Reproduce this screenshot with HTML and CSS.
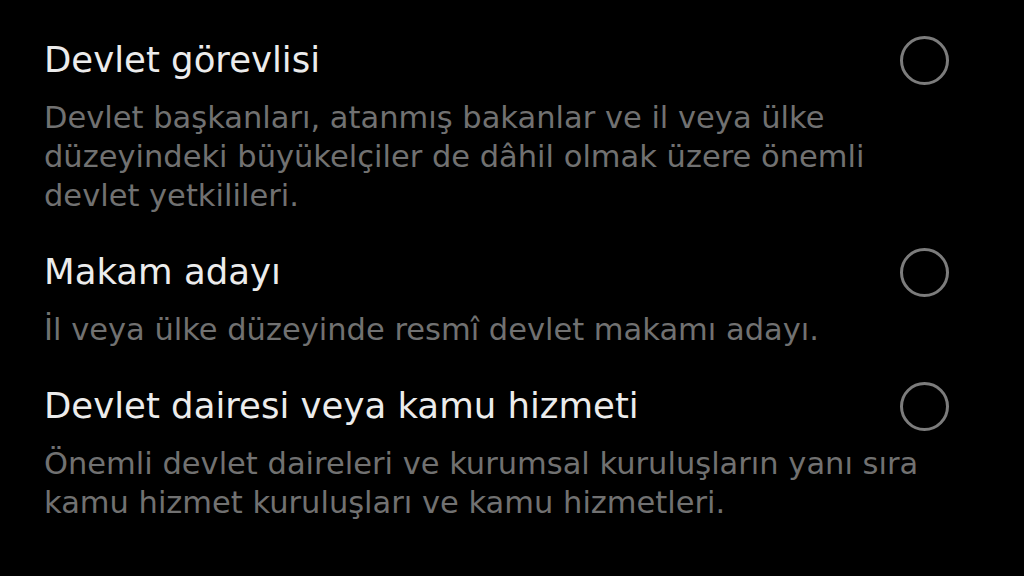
FILE: index.html
```html
<!DOCTYPE html>
<html lang="tr">
<head>
<meta charset="utf-8">
<title>Kategori</title>
<link rel="stylesheet" href="styles.css">
</head>
<body>
<main class="list">
  <div class="option">
    <div class="option-text">
      <div class="title-row">
        <span class="title">Devlet görevlisi</span>
        <span class="radio"></span>
      </div>
      <p class="desc">Devlet başkanları, atanmış bakanlar ve il veya ülke düzeyindeki büyükelçiler de dâhil olmak üzere önemli devlet yetkilileri.</p>
    </div>
  </div>
  <div class="option">
    <div class="option-text">
      <div class="title-row">
        <span class="title">Makam adayı</span>
        <span class="radio"></span>
      </div>
      <p class="desc">İl veya ülke düzeyinde resmî devlet makamı adayı.</p>
    </div>
  </div>
  <div class="option">
    <div class="option-text">
      <div class="title-row">
        <span class="title">Devlet dairesi veya kamu hizmeti</span>
        <span class="radio"></span>
      </div>
      <p class="desc">Önemli devlet daireleri ve kurumsal kuruluşların yanı sıra kamu hizmet kuruluşları ve kamu hizmetleri.</p>
    </div>
  </div>
</main>
</body>
</html>
```

FILE: styles.css
```css
html, body {
  margin: 0;
  padding: 0;
  background: #000;
}

body {
  font-family: "DejaVu Sans", Inter, sans-serif;
  width: 1024px;
  height: 576px;
  overflow: hidden;
}

.list {
  display: flex;
  flex-direction: column;
  gap: 37px;
  padding: 40px 75px 0 44px;
}

.option-text {
  display: flex;
  flex-direction: column;
}

.title-row {
  display: flex;
  align-items: center;
  justify-content: space-between;
  height: 40px;
}

.title {
  color: #ececec;
  font-size: 35.5px;
  line-height: 40px;
}

.radio {
  box-sizing: border-box;
  width: 49px;
  height: 49px;
  border: 3.5px solid #7c7c7c;
  border-radius: 50%;
  flex: none;
}

.desc {
  margin: 18px 0 0;
  width: 880px;
  color: #717171;
  font-size: 30.5px;
  line-height: 39px;
}
```
